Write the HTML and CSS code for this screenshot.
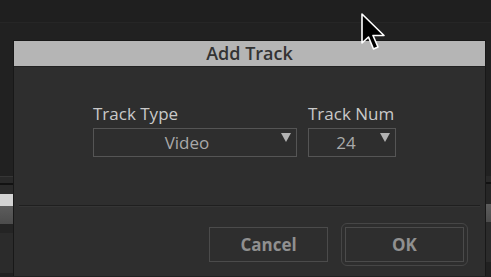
FILE: index.html
```html
<!DOCTYPE html>
<html lang="en">
<head>
    <meta charset="UTF-8">
    <title>Add Track</title>
    <link rel="stylesheet" href="styles.css">
</head>
<body>
    <div class="topbar"></div>
    <div class="stage">
        <div class="side side-left">
            <div class="strip s-line"></div>
            <div class="strip s-head"></div>
            <div class="strip s-dark"></div>
            <div class="strip s-row"></div>
            <div class="strip light"></div>
            <div class="strip mid"></div>
            <div class="strip s-gap"></div>
            <div class="strip s-rest"></div>
        </div>
        <div class="dialog">
            <div class="title">Add Track</div>
            <div class="fields">
                <div class="field">
                    <label>Track Type</label>
                    <div class="select wide">
                        <span>Video</span>
                        <svg class="arrow" width="10" height="9" viewBox="0 0 10 9"><path d="M0 0 H10 L5 9 Z" fill="#b3b3b3"/></svg>
                    </div>
                </div>
                <div class="field">
                    <label>Track Num</label>
                    <div class="select narrow">
                        <span>24</span>
                        <svg class="arrow" width="10" height="9" viewBox="0 0 10 9"><path d="M0 0 H10 L5 9 Z" fill="#b3b3b3"/></svg>
                    </div>
                </div>
            </div>
            <div class="sep"></div>
            <div class="buttons">
                <button class="btn">Cancel</button>
                <div class="focus"><button class="btn ok">OK</button></div>
            </div>
        </div>
        <div class="side side-right">
            <div class="strip s-head"></div>
            <div class="strip s-dark"></div>
            <div class="strip s-row r-row"></div>
            <div class="strip mid r-mid"></div>
            <div class="strip s-rest"></div>
        </div>
    </div>

    <svg class="cursor" width="28" height="40" viewBox="0 0 28 40">
        <path d="M2 1 L2 30 L8.5 24 L13.5 36 L18 34 L13 22.5 L24 22.5 Z" fill="#000" stroke="#fff" stroke-width="1.6" stroke-linejoin="round"/>
    </svg>
</body>
</html>
```

FILE: styles.css
```css
body{
    margin: 0;
    padding: 0;
    background-color: #212121;
    font-family: "Open Sans", "Noto Sans", sans-serif;
    overflow: hidden;
    height: 277px;
}
.topbar{
    height: 22px;
    border-bottom: 1px solid #262626;
    background-color: #1f1f1f;
}
.stage{
    display: flex;
    margin-top: 17px;
}
.side{
    display: flex;
    flex-direction: column;
    padding-top: 136px;
}
.side-left{
    width: 13px;
}
.side-right{
    flex: 1;
}
.s-line{
    height: 1px;
    background-color: #363636;
}
.s-head{
    height: 6px;
    background-color: #292929;
}
.s-dark{
    height: 2px;
    background-color: #121212;
}
.s-row{
    height: 9px;
    background-color: #2a2a2a;
}
.r-row{
    height: 20px;
    background-color: #262626;
}
.strip.light{
    height: 12px;
    background-color: #d3d3d3;
}
.strip.mid{
    height: 18px;
    background: linear-gradient(#5c5c5c, #4c4c4c);
}
.r-mid{
    height: 20px;
}
.s-gap{
    height: 9px;
    background-color: #242424;
}
.s-rest{
    height: 40px;
    background-color: #2b2b2b;
}
.dialog{
    width: 471px;
    height: 235px;
    border: 1px solid #181818;
    border-bottom: none;
    background-color: #2e2e2e;
}
.title{
    height: 25px;
    line-height: 25px;
    background-color: #b5b5b5;
    border-bottom: 1px solid #222;
    color: #333;
    font-size: 18px;
    font-weight: 600;
    text-align: center;
}
.fields{
    display: flex;
    gap: 11px;
    padding: 36px 0 0 79px;
}
.field{
    display: flex;
    flex-direction: column;
}
label{
    color: #c9c9c9;
    font-size: 17px;
    line-height: 22px;
    margin-bottom: 3px;
}
.select{
    position: relative;
    box-sizing: border-box;
    height: 29px;
    border: 1px solid #555;
    color: #a9a9a9;
    font-size: 17px;
    line-height: 27px;
    text-align: center;
}
.select.wide{
    width: 204px;
}
.select.wide span{
    margin-left: -16px;
}
.select.narrow{
    width: 88px;
}
.select.narrow span{
    margin-left: -12px;
}
.arrow{
    position: absolute;
    right: 5px;
    top: 4px;
}
.sep{
    margin: 48px 5px 0 5px;
    height: 1px;
    background-color: #1f1f1f;
    border-bottom: 1px solid #353535;
}
.buttons{
    display: flex;
    justify-content: flex-end;
    align-items: center;
    gap: 13px;
    padding: 16px 17px 0 0;
}
.btn{
    width: 119px;
    height: 35px;
    background: transparent;
    border: 1px solid #4b4b4b;
    color: #909090;
    font-family: "Open Sans", "Noto Sans", sans-serif;
    font-size: 17px;
    font-weight: 700;
}
.focus{
    padding: 3px;
    border: 1px solid #464646;
    border-radius: 6px;
}
.cursor{
    position: absolute;
    left: 360px;
    top: 13px;
}
```
